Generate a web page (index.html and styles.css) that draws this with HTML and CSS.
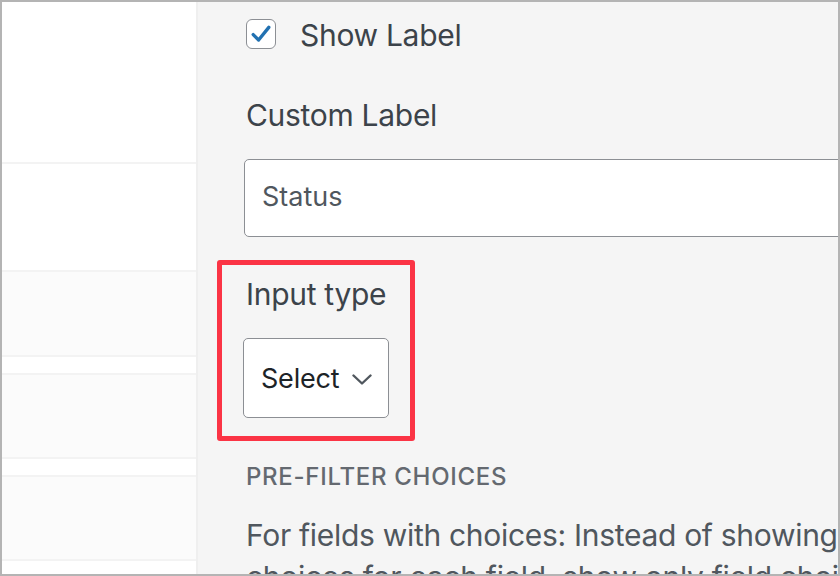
FILE: index.html
```html
<!DOCTYPE html>
<html lang="en">
<head>
<meta charset="utf-8">
<title>Field settings</title>
<link rel="stylesheet" href="styles.css">
</head>
<body>
<div class="frame">
  <aside class="sidebar">
    <div class="row row-white row-h162"></div>
    <div class="row row-white row-h106"></div>
    <div class="row row-grey row-h83"></div>
    <div class="row row-white row-h16"></div>
    <div class="row row-grey row-h82"></div>
    <div class="row row-white row-h16"></div>
    <div class="row row-grey row-h82"></div>
    <div class="row row-white row-h16"></div>
  </aside>
  <main class="panel">
    <div class="content">
      <label class="check-row">
        <span class="checkbox">
          <svg viewBox="0 0 20 20" width="24" height="24" aria-hidden="true"><path d="M3.5 10.5 L8 15 L16.5 4.5" fill="none" stroke="#2271b1" stroke-width="2.8" stroke-linecap="round" stroke-linejoin="round"/></svg>
        </span>
        <span class="check-text">Show Label</span>
      </label>

      <div class="field-label">Custom Label</div>
      <div class="text-input"><span class="input-value">Status</span></div>

      <div class="highlight">
        <div class="field-label field-label-tight">Input type</div>
        <div class="select">
          <span class="select-value">Select</span>
          <svg class="chevron" viewBox="0 0 20 11" width="20" height="11" aria-hidden="true"><polyline points="1.5,1.5 10,9.5 18.5,1.5" fill="none" stroke="#50575e" stroke-width="2.4" stroke-linecap="round" stroke-linejoin="round"/></svg>
        </div>
      </div>

      <div class="section-title">PRE-FILTER CHOICES</div>
      <p class="description">For fields with choices: Instead of showing all choices for each field, show only field choices that exist in entries.</p>
    </div>
  </main>
</div>
</body>
</html>
```
FILE: styles.css
```css
html, body {
  margin: 0;
  padding: 0;
  background: #ffffff;
}

.frame {
  width: 840px;
  height: 576px;
  box-sizing: border-box;
  border: 2px solid #b4b4b4;
  display: flex;
  overflow: hidden;
  font-family: Inter, "Noto Sans", "Liberation Sans", sans-serif;
}

.sidebar {
  width: 194px;
  flex: 0 0 194px;
  background: #ffffff;
  border-right: 2px solid #efefef;
  display: flex;
  flex-direction: column;
}

.row {
  flex: 0 0 auto;
  border-bottom: 2px solid #f3f3f3;
}
.row-white { background: #ffffff; }
.row-grey { background: #fbfbfb; }
.row-h162 { height: 160px; }
.row-h106 { height: 106px; }
.row-h83 { height: 83px; }
.row-h82 { height: 82px; }
.row-h16 { height: 16px; }

.panel {
  flex: 1 1 auto;
  background: #f5f5f5;
  overflow: hidden;
  padding-left: 48px;
}

.content {
  width: 680px;
  padding-top: 15px;
}

.check-row {
  display: flex;
  align-items: center;
  height: 36px;
  gap: 24px;
}

.checkbox {
  width: 30px;
  height: 30px;
  box-sizing: border-box;
  border: 1.5px solid #8c8f94;
  border-radius: 6px;
  background: #ffffff;
  display: flex;
  align-items: center;
  justify-content: center;
  margin-top: -2px;
}

.check-text {
  font-size: 30px;
  line-height: 36px;
  letter-spacing: -0.3px;
  color: #3c434a;
}

.field-label {
  font-size: 30px;
  line-height: 36px;
  letter-spacing: -0.3px;
  color: #3c434a;
  margin-top: 44px;
}

.field-label-tight {
  margin-top: 0;
}

.text-input {
  margin-top: 26px;
  margin-left: -2px;
  height: 78px;
  box-sizing: border-box;
  border: 1.5px solid #8c8f94;
  border-radius: 5px;
  background: #ffffff;
  display: flex;
  align-items: center;
  padding-left: 17px;
  padding-bottom: 3px;
}

.input-value {
  font-size: 27px;
  line-height: 33px;
  color: #50575e;
}

.highlight {
  margin-top: 23px;
  margin-left: -29px;
  width: 198px;
  box-sizing: border-box;
  border: 5px solid #fb3445;
  border-radius: 3px;
  padding: 11px 0 18px 24px;
}

.select {
  margin-top: 26px;
  margin-left: -3px;
  width: 146px;
  height: 80px;
  box-sizing: border-box;
  border: 1.5px solid #8c8f94;
  border-radius: 5px;
  background: #ffffff;
  display: flex;
  align-items: center;
  padding-left: 17px;
  gap: 13px;
}

.select-value {
  font-size: 27px;
  line-height: 33px;
  letter-spacing: -0.2px;
  color: #1d2327;
}

.chevron {
  margin-top: 2px;
}

.section-title {
  margin-top: 21px;
  font-size: 24px;
  line-height: 29px;
  font-weight: 500;
  letter-spacing: 0.7px;
  color: #646970;
}

.description {
  margin: 23px 0 0 0;
  font-size: 30px;
  line-height: 42px;
  letter-spacing: -0.3px;
  color: #50575e;
}
```
